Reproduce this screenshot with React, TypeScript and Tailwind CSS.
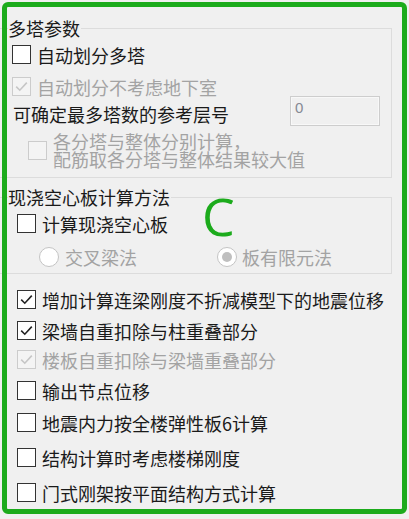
import React from "react";

type CBProps = { checked?: boolean; disabled?: boolean };

function CheckBox({ checked, disabled }: CBProps) {
  return (
    <span
      className={
        "flex h-[19px] w-[19px] shrink-0 items-center justify-center border " +
        (disabled ? "border-[#cccccc] bg-[#f4f4f4]" : "border-[#333333] bg-white")
      }
    >
      {checked && (
        <svg width="17" height="17" viewBox="0 0 17 17">
          <path
            d="M3.2 8.6 L6.8 12.2 L13.8 4.6"
            fill="none"
            stroke={disabled ? "#c6c6c6" : "#222222"}
            strokeWidth="1.6"
          />
        </svg>
      )}
    </span>
  );
}

function Radio({ checked }: { checked?: boolean }) {
  return (
    <span className="flex h-[20px] w-[20px] shrink-0 items-center justify-center rounded-full border border-[#c4c4c4] bg-white">
      {checked && <span className="h-[10px] w-[10px] rounded-full bg-[#bfbfbf]" />}
    </span>
  );
}

function Row({
  mt,
  checked,
  disabled,
  children,
}: {
  mt: string;
  checked?: boolean;
  disabled?: boolean;
  children: React.ReactNode;
}) {
  return (
    <div className={"flex h-[19px] items-center gap-[6px] " + mt}>
      <CheckBox checked={checked} disabled={disabled} />
      <span className={"whitespace-nowrap " + (disabled ? "text-[#a3a3a3]" : "")}>{children}</span>
    </div>
  );
}

export default function App() {
  return (
    <div className="relative h-[519px] w-[409px] overflow-hidden bg-[#f0f0f0] font-['Noto_Sans_CJK_SC','Noto_Sans_CJK_JP',sans-serif] text-[18px] leading-[18px] text-[#1a1a1a]">
      <div className="flex w-[392px] flex-col pt-[19px]">
        {/* 多塔参数 */}
        <fieldset className="border-t border-r border-b border-[#dcdcdc]">
          <legend className="ml-[8px] pr-[1px] leading-[18px]">多塔参数</legend>
          <div className="flex flex-col pb-[9px] pl-[12px] pr-[11px]">
            <Row mt="mt-[8px]">自动划分多塔</Row>
            <Row mt="mt-[13px]" checked disabled>
              自动划分不考虑地下室
            </Row>
            <div className="flex h-[30px] items-center justify-between">
              <span className="mt-[6px] whitespace-nowrap pl-[1px]">可确定最多塔数的参考层号</span>
              <div className="h-[30px] w-[90px] border border-[#cdcdcd] pl-[4px] pt-[3px] font-['Liberation_Sans',sans-serif] text-[15px] leading-[15px] text-[#858a94] shadow-[inset_0_0_0_1px_#f8f8f8]">
                0
              </div>
            </div>
            <div className="mt-[6px] flex items-center gap-[6px] pl-[16px]">
              <CheckBox disabled />
              <span className="whitespace-nowrap text-[#a3a3a3]">
                各分塔与整体分别计算，
                <br />
                配筋取各分塔与整体结果较大值
              </span>
            </div>
          </div>
        </fieldset>

        {/* 现浇空心板计算方法 */}
        <fieldset className="mt-[10px] border-t border-r border-b border-[#dcdcdc]">
          <legend className="ml-[8px] pr-[1px] leading-[18px]">现浇空心板计算方法</legend>
          <div className="flex flex-col pb-[6px] pl-[17px]">
            <Row mt="mt-[8px]">计算现浇空心板</Row>
            <div className="mt-[14px] flex h-[20px] items-center pl-[22px] text-[#a3a3a3]">
              <div className="flex w-[178px] items-center gap-[6px]">
                <Radio />
                <span>交叉梁法</span>
              </div>
              <div className="flex items-center gap-[5px]">
                <Radio checked />
                <span>板有限元法</span>
              </div>
            </div>
          </div>
        </fieldset>

        <div className="flex flex-col pl-[17px]">
          <Row mt="mt-[16px]" checked>
            增加计算连梁刚度不折减模型下的地震位移
          </Row>
          <Row mt="mt-[12px]" checked>
            梁墙自重扣除与柱重叠部分
          </Row>
          <Row mt="mt-[10px]" checked disabled>
            楼板自重扣除与梁墙重叠部分
          </Row>
          <Row mt="mt-[12px]">输出节点位移</Row>
          <Row mt="mt-[13px]">地震内力按全楼弹性板6计算</Row>
          <Row mt="mt-[16px]">结构计算时考虑楼梯刚度</Row>
          <Row mt="mt-[16px]">门式刚架按平面结构方式计算</Row>
        </div>
      </div>

      {/* green annotation overlay */}
      <div className="pointer-events-none absolute left-[2px] top-[2px] h-[512px] w-[405px] rounded-[6px] border-[5px] border-[#1cab1c]" />
      <div className="pointer-events-none absolute left-[202px] top-[190px] font-['Open_Sans',sans-serif] text-[52px] leading-[52px] text-[#1cab1c]">
        C
      </div>
    </div>
  );
}
